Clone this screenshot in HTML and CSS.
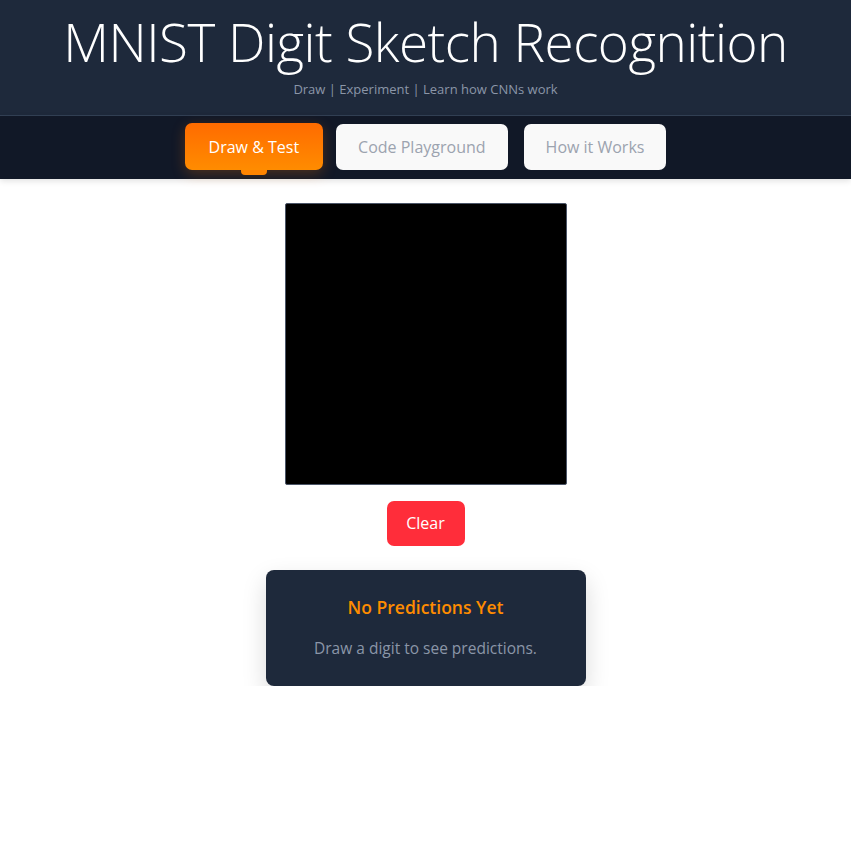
FILE: index.html
```html
<!DOCTYPE html>
<html lang="en">
<head>
<meta charset="utf-8">
<title>MNIST Digit Sketch Recognition</title>
<link rel="stylesheet" href="styles.css">
</head>
<body>
<header class="site-header">
  <h1 class="title">MNIST Digit Sketch Recognition</h1>
  <p class="subtitle">Draw | Experiment | Learn how CNNs work</p>
</header>
<nav class="tabs">
  <button class="tab active">Draw &amp; Test</button>
  <button class="tab">Code Playground</button>
  <button class="tab">How it Works</button>
</nav>
<main class="main">
  <div class="canvas"></div>
  <button class="clear-btn">Clear</button>
  <section class="card">
    <h2 class="card-title">No Predictions Yet</h2>
    <p class="card-text">Draw a digit to see predictions.</p>
  </section>
</main>
</body>
</html>
```
FILE: styles.css
```css
* { box-sizing: border-box; }
body {
  margin: 0;
  background: #ffffff;
  font-family: "Open Sans", "Noto Sans", sans-serif;
}
.site-header {
  background: #1e293b;
  border-bottom: 1px solid #334155;
  height: 116px;
  text-align: center;
  padding-top: 10px;
}
.title {
  margin: 0;
  font-size: 53px;
  font-weight: 300;
  color: #ffffff;
  line-height: 64px;
  letter-spacing: -0.5px;
}
.subtitle {
  margin: 6px 0 0;
  font-size: 13px;
  color: #8b96a8;
  line-height: 18px;
}
.tabs {
  background: #111827;
  height: 63px;
  display: flex;
  justify-content: center;
  align-items: flex-start;
  padding-top: 8px;
  gap: 16px;
  box-shadow: 0 2px 6px rgba(0,0,0,0.12);
  position: relative;
  z-index: 1;
}
.tab {
  font-family: inherit;
  font-size: 16px;
  height: 46px;
  padding: 0 22px;
  border: none;
  border-radius: 7px;
  background: #f9f9f9;
  color: #9ca3af;
  position: relative;
}
.tab.active {
  background: linear-gradient(180deg, #ff6b00, #ff8c00);
  color: #ffffff;
  height: 47px;
  padding: 0 24px;
  margin-top: -1px;
  margin-right: -3px;
  box-shadow: 0 4px 14px rgba(255,120,0,0.25);
}
.tab.active::after {
  content: "";
  position: absolute;
  left: 50%;
  bottom: -5px;
  width: 26px;
  height: 5px;
  margin-left: -13px;
  background: #ff8400;
  border-radius: 0 0 4px 4px;
}
.main {
  display: flex;
  flex-direction: column;
  align-items: center;
  padding-top: 24px;
}
.canvas {
  width: 282px;
  height: 282px;
  background: #000000;
  border: 1px solid #4b5567;
  border-radius: 2px;
}
.clear-btn {
  margin-top: 16px;
  width: 78px;
  height: 45px;
  border: none;
  border-radius: 7px;
  background: #ff2d3a;
  color: #ffffff;
  font-family: inherit;
  font-size: 16px;
  padding: 0 0 1px;
}
.card {
  margin-top: 24px;
  width: 320px;
  height: 116px;
  background: #1e293b;
  border-radius: 8px;
  box-shadow: 0 10px 25px rgba(0,0,0,0.15);
  text-align: center;
  padding-top: 26px;
}
.card-title {
  margin: 0;
  font-size: 17.5px;
  font-weight: 600;
  color: #ff8c00;
  line-height: 22px;
}
.card-text {
  margin: 20px 0 0;
  font-size: 15.5px;
  color: #8b96a8;
  line-height: 20px;
}
```
